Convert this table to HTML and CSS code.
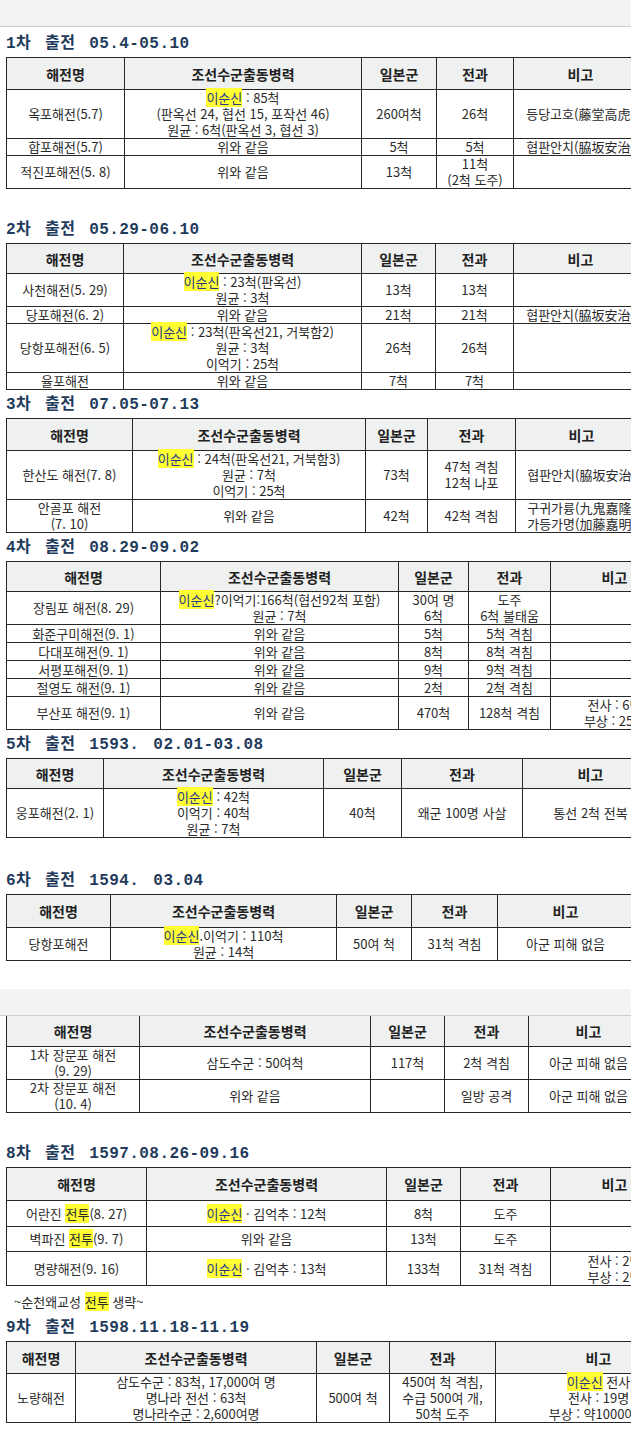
FILE: index.html
```html
<!DOCTYPE html>
<html lang="ko">
<head>
<meta charset="utf-8">
<title>이순신 해전 출동 기록</title>
<link rel="stylesheet" href="styles.css">
</head>
<body>
<div class="band"></div>

<h2 class="title first">1차 출전 05.4-05.10</h2>
<table class="war t1">
  <thead><tr class="hd32"><th>해전명</th><th>조선수군출동병력</th><th>일본군</th><th>전과</th><th>비고</th></tr></thead>
  <tbody>
    <tr><td>옥포해전(5.7)</td><td><span class="hl">이순신</span> : 85척<br>(판옥선 24, 협선 15, 포작선 46)<br>원균 : 6척(판옥선 3, 협선 3)</td><td>260여척</td><td>26척</td><td class="note">등당고호(藤堂高虎)</td></tr>
    <tr><td>합포해전(5.7)</td><td>위와 같음</td><td>5척</td><td>5척</td><td class="note">협판안치(脇坂安治)</td></tr>
    <tr><td>적진포해전(5. 8)</td><td>위와 같음</td><td>13척</td><td>11척<br>(2척 도주)</td><td class="note"></td></tr>
  </tbody>
</table>

<h2 class="title gap">2차 출전 05.29-06.10</h2>
<table class="war t2">
  <thead><tr class="hd30"><th>해전명</th><th>조선수군출동병력</th><th>일본군</th><th>전과</th><th>비고</th></tr></thead>
  <tbody>
    <tr><td>사천해전(5. 29)</td><td><span class="hl">이순신</span> : 23척(판옥선)<br>원균 : 3척</td><td>13척</td><td>13척</td><td class="note"></td></tr>
    <tr><td>당포해전(6. 2)</td><td>위와 같음</td><td>21척</td><td>21척</td><td class="note">협판안치(脇坂安治)</td></tr>
    <tr><td>당항포해전(6. 5)</td><td><span class="hl">이순신</span> : 23척(판옥선21, 거북함2)<br>원균 : 3척<br>이억기 : 25척</td><td>26척</td><td>26척</td><td class="note"></td></tr>
    <tr><td>율포해전</td><td>위와 같음</td><td>7척</td><td>7척</td><td class="note"></td></tr>
  </tbody>
</table>

<h2 class="title">3차 출전 07.05-07.13</h2>
<table class="war t3">
  <thead><tr class="hd32"><th>해전명</th><th>조선수군출동병력</th><th>일본군</th><th>전과</th><th>비고</th></tr></thead>
  <tbody>
    <tr><td>한산도 해전(7. 8)</td><td><span class="hl">이순신</span> : 24척(판옥선21, 거북함3)<br>원균 : 7척<br>이억기 : 25척</td><td>73척</td><td>47척 격침<br>12척 나포</td><td class="note">협판안치(脇坂安治)</td></tr>
    <tr><td>안골포 해전<br>(7. 10)</td><td>위와 같음</td><td>42척</td><td>42척 격침</td><td class="note">구귀가륭(九鬼嘉隆)<br>가등가명(加藤嘉明)</td></tr>
  </tbody>
</table>

<h2 class="title">4차 출전 08.29-09.02</h2>
<table class="war t4">
  <thead><tr class="hd30"><th>해전명</th><th>조선수군출동병력</th><th>일본군</th><th>전과</th><th>비고</th></tr></thead>
  <tbody>
    <tr><td>장림포 해전(8. 29)</td><td><span class="hl">이순신</span>?이억기:166척(협선92척 포함)<br>원균 : 7척</td><td>30여 명<br>6척</td><td>도주<br>6척 불태움</td><td class="note"></td></tr>
    <tr class="r18"><td>화준구미해전(9. 1)</td><td>위와 같음</td><td>5척</td><td>5척 격침</td><td class="note"></td></tr>
    <tr class="r18"><td>다대포해전(9. 1)</td><td>위와 같음</td><td>8척</td><td>8척 격침</td><td class="note"></td></tr>
    <tr class="r18"><td>서평포해전(9. 1)</td><td>위와 같음</td><td>9척</td><td>9척 격침</td><td class="note"></td></tr>
    <tr class="r18"><td>절영도 해전(9. 1)</td><td>위와 같음</td><td>2척</td><td>2척 격침</td><td class="note"></td></tr>
    <tr><td>부산포 해전(9. 1)</td><td>위와 같음</td><td>470척</td><td>128척 격침</td><td class="note">전사 : 6명<br>부상 : 25명</td></tr>
  </tbody>
</table>

<h2 class="title">5차 출전 1593. 02.01-03.08</h2>
<table class="war t5">
  <thead><tr class="hd30"><th>해전명</th><th>조선수군출동병력</th><th>일본군</th><th>전과</th><th>비고</th></tr></thead>
  <tbody>
    <tr><td>웅포해전(2. 1)</td><td><span class="hl">이순신</span> : 42척<br>이억기 : 40척<br>원균 : 7척</td><td>40척</td><td>왜군 100명 사살</td><td class="note">통선 2척 전복</td></tr>
  </tbody>
</table>

<h2 class="title gap wide">6차 출전 1594. 03.04</h2>
<table class="war t6">
  <thead><tr class="hd33"><th>해전명</th><th>조선수군출동병력</th><th>일본군</th><th>전과</th><th>비고</th></tr></thead>
  <tbody>
    <tr><td>당항포해전</td><td><span class="hl">이순신</span>.이억기 : 110척<br>원균 : 14척</td><td>50여 척</td><td>31척 격침</td><td class="note">아군 피해 없음</td></tr>
  </tbody>
</table>

<div class="band mid"></div>
<table class="war t7 cut">
  <thead><tr class="hd31"><th>해전명</th><th>조선수군출동병력</th><th>일본군</th><th>전과</th><th>비고</th></tr></thead>
  <tbody>
    <tr><td>1차 장문포 해전<br>(9. 29)</td><td>삼도수군 : 50여척</td><td>117척</td><td>2척 격침</td><td class="note">아군 피해 없음</td></tr>
    <tr><td>2차 장문포 해전<br>(10. 4)</td><td>위와 같음</td><td></td><td>일방 공격</td><td class="note">아군 피해 없음</td></tr>
  </tbody>
</table>

<h2 class="title gap">8차 출전 1597.08.26-09.16</h2>
<table class="war t8">
  <thead><tr class="hd33"><th>해전명</th><th>조선수군출동병력</th><th>일본군</th><th>전과</th><th>비고</th></tr></thead>
  <tbody>
    <tr class="r26"><td>어란진 <span class="hl2">전투</span>(8. 27)</td><td><span class="hl">이순신</span> · 김억추 : 12척</td><td>8척</td><td>도주</td><td class="note"></td></tr>
    <tr class="r25"><td>벽파진 <span class="hl2">전투</span>(9. 7)</td><td>위와 같음</td><td>13척</td><td>도주</td><td class="note"></td></tr>
    <tr class="r34"><td>명량해전(9. 16)</td><td><span class="hl">이순신</span> · 김억추 : 13척</td><td>133척</td><td>31척 격침</td><td class="note">전사 : 2명<br>부상 : 2명</td></tr>
  </tbody>
</table>
<p class="omit">~순천왜교성 <span class="hl2">전투</span> 생략~</p>

<h2 class="title after-omit">9차 출전 1598.11.18-11.19</h2>
<table class="war t9">
  <thead><tr class="hd32"><th>해전명</th><th>조선수군출동병력</th><th>일본군</th><th>전과</th><th>비고</th></tr></thead>
  <tbody>
    <tr><td>노량해전</td><td>삼도수군 : 83척, 17,000여 명<br>명나라 전선 : 63척<br>명나라수군 : 2,600여명</td><td>500여 척</td><td>450여 척 격침,<br>수급 500여 개,<br>50척 도주</td><td class="note"><span class="hl">이순신</span> 전사<br>전사 : 19명<br>부상 : 약1000여명</td></tr>
  </tbody>
</table>
</body>
</html>
```

FILE: styles.css
```css
html, body {
  margin: 0;
  padding: 0;
  background: #ffffff;
}
body {
  overflow-x: hidden;
  font-family: "Noto Sans CJK KR", "Noto Sans", sans-serif;
  font-size: 13px;
  color: #2b2b2b;
}

.band {
  height: 26px;
  background: #f3f3f3;
  border-bottom: 1px solid #cdcdcd;
}
.band.mid {
  margin-top: 28px;
}

.title {
  margin: 4px 0 2px 6px;
  height: 22px;
  line-height: 22px;
  font-family: "Liberation Mono", "Noto Sans CJK KR", monospace;
  font-size: 16px;
  font-weight: bold;
  color: #1f3b5c;
  letter-spacing: 0.4px;
  word-spacing: 4px;
  white-space: nowrap;
}
.title.first { margin-top: 6px; }
.title.gap { margin-top: 30px; }
.title.gap.wide { margin-top: 32px; }
.title.after-omit { margin-top: 6px; }

.war {
  margin-left: 6px;
  border-collapse: separate;
  border-spacing: 0;
  table-layout: fixed;
  border-top: 1px solid #262626;
  border-left: 1px solid #262626;
}
.war.cut { border-top: none; }

.war th,
.war td {
  box-sizing: border-box;
  border-right: 1px solid #262626;
  border-bottom: 1px solid #262626;
  padding: 0 2px;
  text-align: center;
  vertical-align: middle;
  white-space: nowrap;
  overflow: visible;
}
.war th {
  background: #eff1f1;
  font-size: 14px;
  font-weight: bold;
  color: #222;
  line-height: 18px;
}
.war td {
  line-height: 16px;
  font-weight: normal;
}

.hd30 th { height: 30px; }
.hd31 th { height: 31px; }
.hd32 th { height: 32px; }
.hd33 th { height: 33px; }
.r18 td { height: 18px; }
.r25 td { height: 25px; }
.r26 td { height: 26px; }
.r34 td { height: 34px; }

.hl {
  background: #ffff33;
  color: #25378a;
}
.hl2 {
  background: #ffff33;
}

.omit {
  margin: 7px 0 0 14px;
  line-height: 18px;
  height: 18px;
  font-size: 13px;
  color: #2b2b2b;
}

/* column grids */
.t1 { width: 642px; }
.t1 th:nth-child(1) { width: 118px; }
.t1 th:nth-child(2) { width: 237px; }
.t1 th:nth-child(3) { width: 75px; }
.t1 th:nth-child(4) { width: 77px; }
.t1 th:nth-child(5) { width: 134px; }

.t2 { width: 642px; }
.t2 th:nth-child(1) { width: 117px; }
.t2 th:nth-child(2) { width: 238px; }
.t2 th:nth-child(3) { width: 74px; }
.t2 th:nth-child(4) { width: 78px; }
.t2 th:nth-child(5) { width: 134px; }

.t3 { width: 642px; }
.t3 th:nth-child(1) { width: 126px; }
.t3 th:nth-child(2) { width: 233px; }
.t3 th:nth-child(3) { width: 62px; }
.t3 th:nth-child(4) { width: 88px; }
.t3 th:nth-child(5) { width: 132px; }

.t4 { width: 673px; }
.t4 th:nth-child(1) { width: 154px; }
.t4 th:nth-child(2) { width: 238px; }
.t4 th:nth-child(3) { width: 70px; }
.t4 th:nth-child(4) { width: 82px; }
.t4 th:nth-child(5) { width: 128px; }

.t5 { width: 653px; }
.t5 th:nth-child(1) { width: 97px; }
.t5 th:nth-child(2) { width: 220px; }
.t5 th:nth-child(3) { width: 78px; }
.t5 th:nth-child(4) { width: 121px; }
.t5 th:nth-child(5) { width: 136px; }

.t6 { width: 628px; }
.t6 th:nth-child(1) { width: 104px; }
.t6 th:nth-child(2) { width: 226px; }
.t6 th:nth-child(3) { width: 75px; }
.t6 th:nth-child(4) { width: 86px; }
.t6 th:nth-child(5) { width: 136px; }

.t7 { width: 643px; }
.t7 th:nth-child(1) { width: 133px; }
.t7 th:nth-child(2) { width: 231px; }
.t7 th:nth-child(3) { width: 74px; }
.t7 th:nth-child(4) { width: 84px; }
.t7 th:nth-child(5) { width: 120px; }

.t8 { width: 673px; }
.t8 th:nth-child(1) { width: 140px; }
.t8 th:nth-child(2) { width: 240px; }
.t8 th:nth-child(3) { width: 74px; }
.t8 th:nth-child(4) { width: 90px; }
.t8 th:nth-child(5) { width: 128px; }

.t9 { width: 696px; }
.t9 th:nth-child(1) { width: 69px; }
.t9 th:nth-child(2) { width: 241px; }
.t9 th:nth-child(3) { width: 73px; }
.t9 th:nth-child(4) { width: 106px; }
.t9 th:nth-child(5) { width: 206px; }
```
